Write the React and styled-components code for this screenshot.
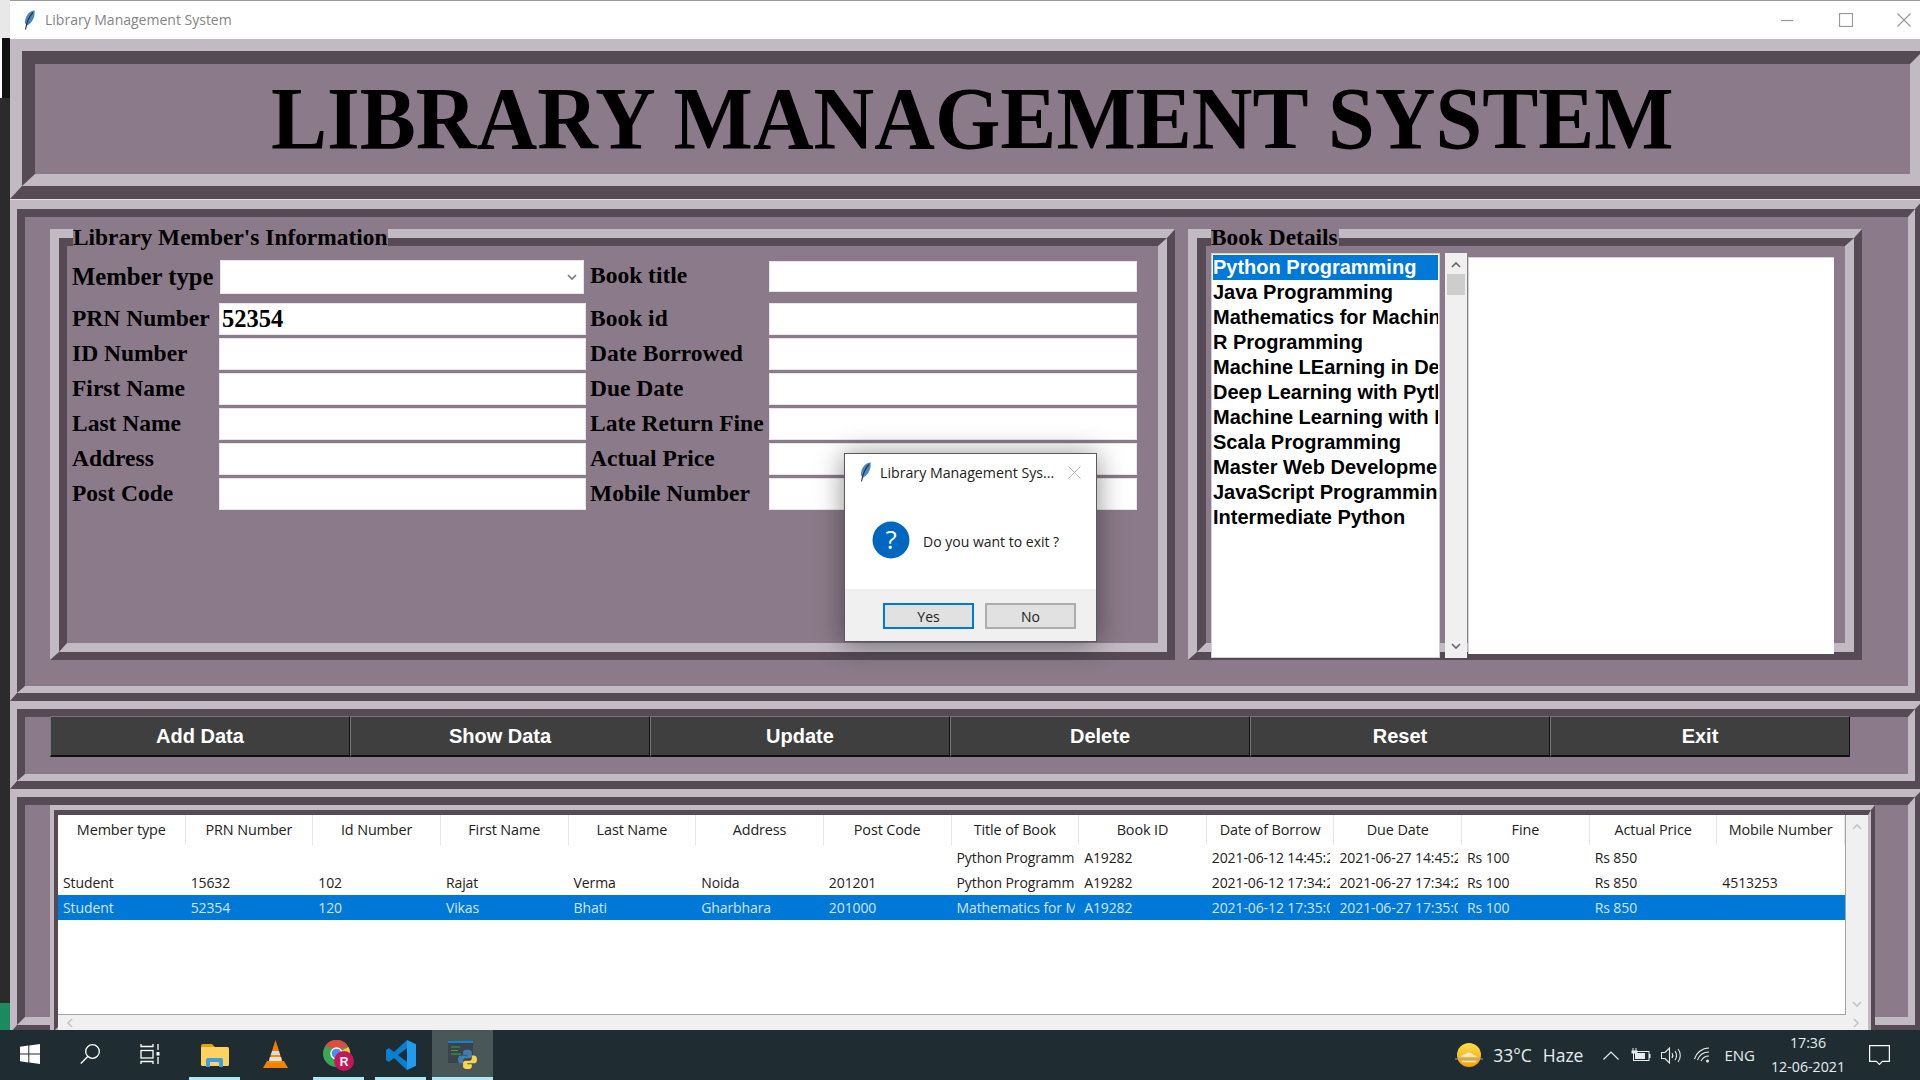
import React from "react";
import styled, { createGlobalStyle } from "styled-components";

const LIGHT = "#c2bac3";
const DARK = "#564b54";
const BG = "#8b7a89";
const UI_FONT = `"Open Sans", "Noto Sans", sans-serif`;
const SERIF = `"Liberation Serif", serif`;
const ARIAL = `"Liberation Sans", Arial, sans-serif`;

const GlobalStyle = createGlobalStyle`
  html, body { margin: 0; padding: 0; background: #1f2d33; }
  * { box-sizing: border-box; }
`;

const Page = styled.div`
  position: relative;
  width: 1920px;
  height: 1080px;
  overflow: hidden;
  display: flex;
  flex-direction: column;
`;

const Workspace = styled.div`
  height: 1030px;
  display: flex;
  overflow: hidden;
`;

const Strip = styled.div`
  width: 10px;
  flex: none;
  display: flex;
  flex-direction: column;
  background: #2b2b2b;
`;

const StripPiece = styled.div`
  height: ${(p) => p.$h}px;
  flex: none;
  background: ${(p) => p.$c};
  border-left: ${(p) => (p.$edge ? "2px solid #fff" : "none")};
`;

const AppWindow = styled.div`
  width: 1910px;
  flex: none;
  display: flex;
  flex-direction: column;
  overflow: hidden;
  background: ${BG};
`;

const TitleBar = styled.div`
  height: 39px;
  flex: none;
  display: flex;
  align-items: center;
  background: #fff;
  border-top: 1px solid #9c9c9c;
  padding: 0 0 1px 14px;
  color: #858585;
  font: 14px ${UI_FONT};
`;

const TitleText = styled.span`
  margin-left: 10px;
  flex: 1;
`;

const WinControl = styled.svg`
  width: 14px;
  height: 14px;
  flex: none;
  margin-right: ${(p) => p.$mr}px;
`;

/* tk style ridge: light/dark outside, dark/light inside */
const RidgeOuter = styled.div`
  position: relative;
  flex: none;
  width: ${(p) => p.$w}px;
  height: ${(p) => p.$h}px;
  border-style: solid;
  border-color: ${LIGHT} ${DARK} ${DARK} ${LIGHT};
  border-width: ${(p) => p.$o};
`;

const RidgeInner = styled.div`
  height: 100%;
  background: ${BG};
  border-style: solid;
  border-color: ${DARK} ${LIGHT} ${LIGHT} ${DARK};
  border-width: ${(p) => p.$i};
`;

const Ridge = ({ w, h, o, i, legend, children }) => (
  <RidgeOuter $w={w} $h={h} $o={o}>
    <RidgeInner $i={i}>{children}</RidgeInner>
    {legend && <Legend>{legend}</Legend>}
  </RidgeOuter>
);

const HeaderBody = styled.div`
  height: 100%;
  display: flex;
  align-items: center;
  justify-content: center;
`;

/* the reference is a resized screenshot, its letters are a bit narrower */
const Heading = styled.h1`
  margin: 0;
  font: bold 88px/1 ${SERIF};
  color: #000;
  white-space: nowrap;
  transform: scaleX(0.955);
`;

const Divider = styled.div`
  height: 1px;
  flex: none;
  background: #e4e0e4;
`;

const MiddleBody = styled.div`
  display: flex;
  gap: 13px;
  padding: 12px 0 0 25px;
`;

const Legend = styled.div`
  position: absolute;
  left: 14px;
  top: -9px;
  height: 17px;
  padding: 0 1px 0 0;
  background: ${BG};
  font: bold 23.4px/17px ${SERIF};
  color: #000;
  white-space: nowrap;
`;

const FormGrid = styled.div`
  display: grid;
  grid-template-columns: 147px 367px 183px 368px;
  grid-template-rows: 43px repeat(6, 35px);
  padding: 14px 0 0 5px;
`;

const FieldLabel = styled.label`
  height: ${(p) => (p.$big ? 34 : 31)}px;
  display: flex;
  align-items: center;
  padding-left: ${(p) => (p.$second ? 4 : 0)}px;
  font: bold ${(p) => (p.$big ? 24.7 : 23.5)}px ${SERIF};
  color: #000;
  white-space: nowrap;
`;

const Entry = styled.div`
  height: ${(p) => (p.$first ? 31 : 32)}px;
  margin-top: ${(p) => (p.$first ? 1 : 0)}px;
  display: flex;
  align-items: center;
  padding-left: 2px;
  background: #fff;
  border: 1px solid #e8e6e8;
  font: bold 24.5px ${SERIF};
  color: #000;
`;

const Combo = styled.div`
  height: 34px;
  margin: 0 2px 0 1px;
  display: flex;
  align-items: center;
  justify-content: flex-end;
  padding-right: 5px;
  background: #fff;
  border: 1px solid #e8e6e8;
`;

const BookBody = styled.div`
  display: flex;
  align-items: flex-start;
  padding: 7px 0 0 5px;
`;

const ListBox = styled.div`
  width: 229px;
  height: 405px;
  flex: none;
  overflow: hidden;
  background: #fff;
  border: 1px solid #d2d0d4;
  padding-top: 1px;
`;

const ListItem = styled.div`
  height: 25px;
  margin: 0 1px;
  overflow: hidden;
  white-space: nowrap;
  font: bold 20px/24px ${ARIAL};
  color: ${(p) => (p.$selected ? "#fff" : "#000")};
  background: ${(p) => (p.$selected ? "#0078d7" : "transparent")};
`;

const ListScroll = styled.div`
  width: 22px;
  height: 405px;
  flex: none;
  margin-left: 5px;
  display: flex;
  flex-direction: column;
  align-items: center;
  justify-content: space-between;
  padding: 6px 0;
  position: relative;
  background: #f0f0f0;
`;

const ListThumb = styled.div`
  position: absolute;
  left: 2px;
  top: 21px;
  width: 18px;
  height: 21px;
  background: #cdcdcd;
`;

const TextArea = styled.div`
  width: 366px;
  height: 397px;
  flex: none;
  margin: 4px 0 0 1px;
  background: #fff;
  border-top: 1px solid #d2d0d4;
  border-left: 1px solid #d2d0d4;
`;

const ButtonBody = styled.div`
  display: flex;
  margin: -1px 0 0;
  padding-left: 25px;
`;

const ActionButton = styled.button`
  width: 300px;
  height: 41px;
  flex: none;
  padding: 0;
  background: #3f3f3f;
  border-style: solid;
  border-width: 1px 1px 2px 1px;
  border-color: #777 #111 #111 #777;
  color: #fff;
  font: bold 20px ${ARIAL};
`;

const TreeWrap = styled.div`
  padding-left: 25px;
`;

const TableArea = styled.div`
  display: grid;
  grid-template-columns: 1788px 22px;
  grid-template-rows: 200px 16px;
`;

const Table = styled.div`
  background: #fff;
  border-right: 1px solid #a4a4a8;
  border-bottom: 1px solid #a4a4a8;
  font: 14px ${UI_FONT};
  letter-spacing: -0.1px;
  color: #222;
  overflow: hidden;
`;

const TreeRow = styled.div`
  display: grid;
  grid-template-columns: repeat(14, 1fr);
  height: ${(p) => (p.$header ? 30 : 25)}px;
  align-items: center;
  background: ${(p) => (p.$selected ? "#0078d7" : "transparent")};
  color: ${(p) => (p.$selected ? "#d3e6f8" : "inherit")};
`;

const HeadCell = styled.div`
  height: 100%;
  display: flex;
  align-items: center;
  justify-content: center;
  border-right: 1px solid #e6e6e6;
  font-size: 14.4px;
  padding-bottom: 1px;
  white-space: nowrap;
`;

const Cell = styled.div`
  min-width: 0;
  margin-right: 4px;
  padding-left: 5px;
  overflow: hidden;
  white-space: nowrap;
`;

const VScroll = styled.div`
  display: flex;
  flex-direction: column;
  align-items: center;
  justify-content: space-between;
  padding: 6px 0 5px;
  background: #f0f0f0;
`;

const HScroll = styled.div`
  grid-column: 1 / span 2;
  display: flex;
  align-items: center;
  justify-content: space-between;
  padding: 0 6px;
  background: #f0f0f0;
`;

const Dialog = styled.div`
  position: absolute;
  left: 844px;
  top: 453px;
  width: 253px;
  height: 189px;
  display: flex;
  flex-direction: column;
  background: #fff;
  border: 1px solid #5a5a5a;
  box-shadow: 0 2px 26px rgba(0, 0, 0, 0.45);
  font-family: ${UI_FONT};
`;

const DialogTitle = styled.div`
  height: 36px;
  flex: none;
  display: flex;
  align-items: center;
  padding: 0 15px 0 15px;
  color: #222;
  font-size: 14.2px;
`;

const DialogTitleText = styled.span`
  margin-left: 9px;
  flex: 1;
  white-space: nowrap;
`;

const DialogBody = styled.div`
  flex: 1;
  display: flex;
  align-items: center;
  padding-left: 27px;
  gap: 13px;
  color: #222;
  font-size: 14px;
`;

const DialogMessage = styled.span`
  padding-top: 3px;
`;

const DialogFooter = styled.div`
  height: 52px;
  flex: none;
  display: flex;
  gap: 11px;
  padding: 14px 0 0 38px;
  background: #f0f0f0;
`;

const DialogButton = styled.button`
  width: 91px;
  height: 26px;
  padding: 0;
  background: #e1e1e1;
  border: 2px solid ${(p) => (p.$primary ? "#0078d7" : "#adadad")};
  color: #222;
  font: 14px ${UI_FONT};
`;

const Taskbar = styled.div`
  height: 50px;
  flex: none;
  display: flex;
  background: #1f2d33;
  color: #e6ecee;
  font-family: ${UI_FONT};
`;

const TaskSlot = styled.div`
  width: ${(p) => p.$w}px;
  height: 50px;
  flex: none;
  margin-right: ${(p) => p.$mr || 0}px;
  display: flex;
  align-items: center;
  justify-content: center;
  background: ${(p) => (p.$open ? "#4a5759" : "transparent")};
  border-bottom: 3px solid ${(p) => (p.$running ? "#a8ecf8" : "transparent")};
  padding-top: ${(p) => (p.$running ? 3 : 0)}px;
`;

const Tray = styled.div`
  margin-left: auto;
  display: flex;
  align-items: center;
  padding-right: 30px;
`;

const TrayItem = styled.div`
  margin-left: ${(p) => p.$ml}px;
  display: flex;
  align-items: center;
  font-size: ${(p) => p.$size || 15}px;
  white-space: nowrap;
`;

const Clock = styled.div`
  width: 76px;
  margin-left: 15px;
  text-align: center;
  font-size: 14.2px;
  line-height: 24px;
  white-space: nowrap;
`;

const Feather = () => (
  <svg width="11" height="20" viewBox="0 0 11 20">
    <path d="M10.500 .3C5.500 .8 .8 6 1 13l1.500 2.500C7.500 14 11.500 7 10.500 .3Z" fill="#4a86c2" />
    <path d="M9 2.500C5 6.500 2.800 11.500 1.500 19.500" stroke="#27333d" strokeWidth="1.100" fill="none" />
  </svg>
);

const Chevron = ({ dir = "down", color = "#888", size = 12 }) => {
  const paths = {
    down: "M2 4l4 4 4-4",
    up: "M2 8l4-4 4 4",
    left: "M8 2L4 6l4 4",
    right: "M4 2l4 4-4 4",
  };
  return (
    <svg width={size} height={size} viewBox="0 0 12 12">
      <path d={paths[dir]} fill="none" stroke={color} strokeWidth="1.600" />
    </svg>
  );
};

const WindowsIcon = () => (
  <svg width="20" height="20" viewBox="0 0 20 20" fill="#fff">
    <polygon points="0,2.800 8.300,1.600 8.300,9.500 0,9.500" />
    <polygon points="9.300,1.400 20,0 20,9.500 9.300,9.500" />
    <polygon points="0,10.500 8.300,10.500 8.300,18.400 0,17.200" />
    <polygon points="9.300,10.500 20,10.500 20,20 9.300,18.600" />
  </svg>
);

const SearchIcon = () => (
  <svg width="20" height="20" viewBox="0 0 20 20" fill="none" stroke="#fff" strokeWidth="1.300">
    <circle cx="12.500" cy="7.500" r="6.800" />
    <line x1="7.800" y1="12.500" x2="0.800" y2="19.500" />
  </svg>
);

const TaskViewIcon = () => (
  <svg width="20" height="20" viewBox="0 0 20 20" fill="none" stroke="#fff" strokeWidth="1.300">
    <path d="M1 0v2.500h12V0M1 20v-2.500h12V20" />
    <rect x="1" y="6.500" width="12" height="7.500" />
    <path d="M18 0v6M18 13v7" />
    <rect x="16.500" y="8" width="3" height="3.500" fill="#fff" stroke="none" />
  </svg>
);

const ExplorerIcon = () => (
  <svg width="28" height="23" viewBox="0 0 28 23">
    <path d="M0 2a2 2 0 0 1 2-2h9l3 3v3H0z" fill="#e0a112" />
    <rect x="0" y="3" width="28" height="19" rx="1.500" fill="#fdd25f" />
    <path d="M5 23v-7a2 2 0 0 1 2-2h13a2 2 0 0 1 2 2v7h-4v-5h-9v5z" fill="#3f9ce6" />
  </svg>
);

const VlcIcon = () => (
  <svg width="25" height="28" viewBox="0 0 25 28">
    <polygon points="0,28 25,28 21,21 4,21" fill="#ee8400" />
    <polygon points="12.500,0 9,11 16,11" fill="#f57c00" />
    <polygon points="9,11 16,11 17.300,15 7.700,15" fill="#dcdcdc" />
    <polygon points="7.700,15 17.300,15 19,23 6,23" fill="#f59300" />
    <polygon points="6.800,17 18.200,17 19,21 6,21" fill="#e2e2e2" />
  </svg>
);

const ChromeIcon = () => (
  <svg width="31" height="31" viewBox="0 0 31 31">
    <circle cx="13.500" cy="13.500" r="13.500" fill="#3aa757" />
    <path d="M2 6.500A13.500 13.500 0 0 1 25.500 7L13.500 9z" fill="#dc4d3f" />
    <path d="M25.500 7A13.500 13.500 0 0 1 20 25.500L13.500 13.500z" fill="#f5c93b" />
    <circle cx="13.500" cy="13.500" r="6.200" fill="#fff" />
    <circle cx="13.500" cy="13.500" r="4.800" fill="#4e8bf0" />
    <circle cx="21" cy="21" r="10" fill="#c2185b" />
    <text x="21" y="25.500" textAnchor="middle" fontFamily="Liberation Sans" fontWeight="700" fontSize="12" fill="#fff">
      R
    </text>
  </svg>
);

const CodeIcon = () => (
  <svg width="30" height="30" viewBox="0 0 30 30">
    <path d="M21 0L8 12 3 8 0 10v10l3 2 5-4 13 12v-8l-9-7 9-7z" fill="#0a7fd0" />
    <path d="M21 0l9 4.300v21.400L21 30z" fill="#1f9cf0" />
  </svg>
);

const PythonIcon = () => (
  <svg width="30" height="29" viewBox="0 0 30 29">
    <rect x="0" y="0" width="25" height="22" fill="#3c4248" />
    <rect x="0" y="0" width="25" height="2" fill="#0a84d8" />
    <path d="M3 6h9M3 9.500h7M3 13h10" stroke="#39a845" strokeWidth="1.200" />
    <g transform="translate(9 8) scale(.87)">
      <path
        d="M12 1C8 1 7 2.500 7 4v2.500h5.200v1H4.500C2.500 7.500 1 9 1 12s1.500 4.500 3.500 4.500H7v-3c0-1.700 1.300-3 3-3h4.500c1.400 0 2.500-1.100 2.500-2.500V4c0-1.500-1.500-3-5-3z"
        fill="#3d7fb5"
      />
      <path
        transform="rotate(180 12 12)"
        d="M12 1C8 1 7 2.500 7 4v2.500h5.200v1H4.500C2.500 7.500 1 9 1 12s1.500 4.500 3.500 4.500H7v-3c0-1.700 1.300-3 3-3h4.500c1.400 0 2.500-1.100 2.500-2.500V4c0-1.500-1.500-3-5-3z"
        fill="#f8d44c"
      />
    </g>
  </svg>
);

const WeatherIcon = () => (
  <svg width="28" height="24" viewBox="0 0 28 24">
    <defs>
      <linearGradient id="sun" x1="0" y1="0" x2="0" y2="1">
        <stop offset="0" stopColor="#fde047" />
        <stop offset="1" stopColor="#f59e0b" />
      </linearGradient>
    </defs>
    <circle cx="14" cy="12" r="12" fill="url(#sun)" />
    <path d="M6 14c1-3 4-3 5-3 1-2 6-2 7 1 2 0 4 1 4 2z" fill="#f1e6d0" />
    <path d="M0 16h28" stroke="#a9a08e" strokeWidth="1" />
    <path d="M7 18.500h14" stroke="#f6e5c0" strokeWidth="1.500" />
  </svg>
);

const TrayChevron = () => (
  <svg width="16" height="9" viewBox="0 0 16 9" fill="none" stroke="#e6ecee" strokeWidth="1.200">
    <path d="M.5 8.500L8 1l7.500 7.500" />
  </svg>
);

const BatteryIcon = () => (
  <svg width="20" height="14" viewBox="0 0 20 14" fill="none" stroke="#e6ecee">
    <rect x="2.500" y="3.500" width="15.500" height="9" />
    <rect x="18" y="6" width="1.500" height="4" fill="#e6ecee" stroke="none" />
    <rect x="4" y="5" width="10" height="6" fill="#e6ecee" stroke="none" />
    <path d="M2 0v3M5 0v3" />
    <rect x="0.500" y="2.500" width="6" height="3" fill="#e6ecee" stroke="none" />
  </svg>
);

const VolumeIcon = () => (
  <svg width="20" height="17" viewBox="0 0 20 17" fill="none" stroke="#e6ecee" strokeWidth="1.100">
    <path d="M.5 5.500h3.500L8.500 1v15L4 11.500H.5z" />
    <path d="M11 6c1 1.500 1 3.500 0 5M14 4c2 2.500 2 6.500 0 9M17 2c3 3.500 3 9.500 0 13" />
  </svg>
);

const WifiIcon = () => (
  <svg width="16" height="16" viewBox="0 0 16 16" fill="none" stroke="#e6ecee" strokeWidth="1.100">
    <path d="M.5 12C2 6 8 1 15 1M3.500 13C5 9 9 5 15 5M7 14c1-2 4-5 8-5" />
    <circle cx="13.500" cy="14" r="1.500" fill="#e6ecee" stroke="none" />
  </svg>
);

const NotifyIcon = () => (
  <svg width="21" height="20" viewBox="0 0 21 20" fill="none" stroke="#fff" strokeWidth="1.200">
    <path d="M.6.600h19.800v15.800h-7l-3 3-3-3H.6z" />
  </svg>
);

const QuestionIcon = () => (
  <svg width="38" height="38" viewBox="0 0 38 38">
    <circle cx="19" cy="19" r="18.500" fill="#0067c0" />
    <text x="19" y="28" textAnchor="middle" fontFamily="Open Sans" fontSize="26" fill="#fff">
      ?
    </text>
  </svg>
);

const leftFields = ["PRN Number", "ID Number", "First Name", "Last Name", "Address", "Post Code"];
const rightFields = ["Book id", "Date Borrowed", "Due Date", "Late Return Fine", "Actual Price", "Mobile Number"];

const books = [
  "Python Programming",
  "Java Programming",
  "Mathematics for Machine Learning",
  "R Programming",
  "Machine LEarning in Depth",
  "Deep Learning with Python",
  "Machine Learning with R",
  "Scala Programming",
  "Master Web Development",
  "JavaScript Programming",
  "Intermediate Python",
];

const buttons = ["Add Data", "Show Data", "Update", "Delete", "Reset", "Exit"];

const columns = [
  "Member type",
  "PRN Number",
  "Id Number",
  "First Name",
  "Last Name",
  "Address",
  "Post Code",
  "Title of Book",
  "Book ID",
  "Date of Borrow",
  "Due Date",
  "Fine",
  "Actual Price",
  "Mobile Number",
];

const rows = [
  ["", "", "", "", "", "", "", "Python Programming", "A19282", "2021-06-12 14:45:22", "2021-06-27 14:45:22", "Rs 100", "Rs 850", ""],
  ["Student", "15632", "102", "Rajat", "Verma", "Noida", "201201", "Python Programming", "A19282", "2021-06-12 17:34:22", "2021-06-27 17:34:22", "Rs 100", "Rs 850", "4513253"],
  ["Student", "52354", "120", "Vikas", "Bhati", "Gharbhara", "201000", "Mathematics for Machine Learning", "A19282", "2021-06-12 17:35:06", "2021-06-27 17:35:06", "Rs 100", "Rs 850", ""],
];

export default function App() {
  return (
    <Page>
      <GlobalStyle />
      <Workspace>
        <Strip>
          <StripPiece $h={38} $c="#e8e8e8" />
          <StripPiece $h={60} $c="#111" $edge />
          <StripPiece $h={905} $c="#2b2b2b" />
          <StripPiece $h={27} $c="#1b8a5e" />
        </Strip>
        <AppWindow>
          <TitleBar>
            <Feather />
            <TitleText>Library Management System</TitleText>
            <WinControl $mr={45} viewBox="0 0 14 14" stroke="#999" fill="none">
              <path d="M1 7.500h12" strokeWidth="1.200" />
            </WinControl>
            <WinControl $mr={44} viewBox="0 0 14 14" stroke="#999" fill="none">
              <rect x=".5" y=".5" width="13" height="13" strokeWidth="1.200" />
            </WinControl>
            <WinControl $mr={9} viewBox="0 0 14 14" stroke="#999" fill="none">
              <path d="M.5.500l13 13M13.500.500l-13 13" strokeWidth="1.200" />
            </WinControl>
          </TitleBar>

          <Ridge w={1926} h={160} o="12px 13px 13px 12px" i="13px 13px 12px 13px">
            <HeaderBody>
              <Heading>LIBRARY MANAGEMENT SYSTEM</Heading>
            </HeaderBody>
          </Ridge>
          <Divider />

          <Ridge w={1913} h={501} o="9px 8px 8px 7px" i="8px 7px 7px 8px">
            <MiddleBody>
              <Ridge w={1125} h={431} o="9px 8px 8px 9px" i="8px 9px 9px 8px" legend="Library Member's Information">
                <FormGrid>
                  <FieldLabel $big>Member type</FieldLabel>
                  <Combo>
                    <Chevron color="#777" />
                  </Combo>
                  <FieldLabel $second>Book title</FieldLabel>
                  <Entry $first />
                  {leftFields.map((label, i) => (
                    <React.Fragment key={label}>
                      <FieldLabel>{label}</FieldLabel>
                      <Entry>{i === 0 ? "52354" : ""}</Entry>
                      <FieldLabel $second>{rightFields[i]}</FieldLabel>
                      <Entry />
                    </React.Fragment>
                  ))}
                </FormGrid>
              </Ridge>
              <Ridge w={674} h={431} o="9px 8px 8px 9px" i="8px 9px 9px 9px" legend="Book Details">
                <BookBody>
                  <ListBox>
                    {books.map((book, i) => (
                      <ListItem key={book} $selected={i === 0}>
                        {book}
                      </ListItem>
                    ))}
                  </ListBox>
                  <ListScroll>
                    <Chevron dir="up" color="#666" />
                    <ListThumb />
                    <Chevron dir="down" color="#666" />
                  </ListScroll>
                  <TextArea />
                </BookBody>
              </Ridge>
            </MiddleBody>
          </Ridge>

          <Ridge w={1913} h={88} o="8px 8px 8px 7px" i="8px 7px 7px 8px">
            <ButtonBody>
              {buttons.map((label) => (
                <ActionButton key={label}>{label}</ActionButton>
              ))}
            </ButtonBody>
          </Ridge>

          <Ridge w={1913} h={244} o="8px 8px 8px 7px" i="8px 7px 8px 8px">
            <TreeWrap>
              <Ridge w={1825} h={230} o="5px 4px 4px 4px" i="5px 3px 4px 4px">
                <TableArea>
                  <Table>
                    <TreeRow $header>
                      {columns.map((c) => (
                        <HeadCell key={c}>{c}</HeadCell>
                      ))}
                    </TreeRow>
                    {rows.map((row, r) => (
                      <TreeRow key={r} $selected={r === 2}>
                        {row.map((value, c) => (
                          <Cell key={c}>{value}</Cell>
                        ))}
                      </TreeRow>
                    ))}
                  </Table>
                  <VScroll>
                    <Chevron dir="up" color="#c4c4c4" />
                    <Chevron dir="down" color="#c4c4c4" />
                  </VScroll>
                  <HScroll>
                    <Chevron dir="left" color="#c4c4c4" />
                    <Chevron dir="right" color="#c4c4c4" />
                  </HScroll>
                </TableArea>
              </Ridge>
            </TreeWrap>
          </Ridge>
        </AppWindow>
      </Workspace>

      <Taskbar>
        <TaskSlot $w={60}>
          <WindowsIcon />
        </TaskSlot>
        <TaskSlot $w={60}>
          <SearchIcon />
        </TaskSlot>
        <TaskSlot $w={60} $mr={9}>
          <TaskViewIcon />
        </TaskSlot>
        <TaskSlot $w={51} $mr={10} $running>
          <ExplorerIcon />
        </TaskSlot>
        <TaskSlot $w={51} $mr={12}>
          <VlcIcon />
        </TaskSlot>
        <TaskSlot $w={51} $mr={11} $running>
          <ChromeIcon />
        </TaskSlot>
        <TaskSlot $w={51} $mr={6} $running>
          <CodeIcon />
        </TaskSlot>
        <TaskSlot $w={61} $running $open>
          <PythonIcon />
        </TaskSlot>
        <Tray>
          <WeatherIcon />
          <TrayItem $ml={10} $size={17.5}>33°C</TrayItem>
          <TrayItem $ml={11} $size={17.5}>Haze</TrayItem>
          <TrayItem $ml={20}>
            <TrayChevron />
          </TrayItem>
          <TrayItem $ml={12}>
            <BatteryIcon />
          </TrayItem>
          <TrayItem $ml={10}>
            <VolumeIcon />
          </TrayItem>
          <TrayItem $ml={13}>
            <WifiIcon />
          </TrayItem>
          <TrayItem $ml={14}>ENG</TrayItem>
          <Clock>
            17:36
            <br />
            12-06-2021
          </Clock>
          <TrayItem $ml={23}>
            <NotifyIcon />
          </TrayItem>
        </Tray>
      </Taskbar>

      <Dialog>
        <DialogTitle>
          <Feather />
          <DialogTitleText>Library Management Sys...</DialogTitleText>
          <svg width="13" height="13" viewBox="0 0 13 13" stroke="#bbb" fill="none">
            <path d="M.5.500l12 12M12.500.500l-12 12" />
          </svg>
        </DialogTitle>
        <DialogBody>
          <QuestionIcon />
          <DialogMessage>Do you want to exit ?</DialogMessage>
        </DialogBody>
        <DialogFooter>
          <DialogButton $primary>Yes</DialogButton>
          <DialogButton>No</DialogButton>
        </DialogFooter>
      </Dialog>
    </Page>
  );
}
